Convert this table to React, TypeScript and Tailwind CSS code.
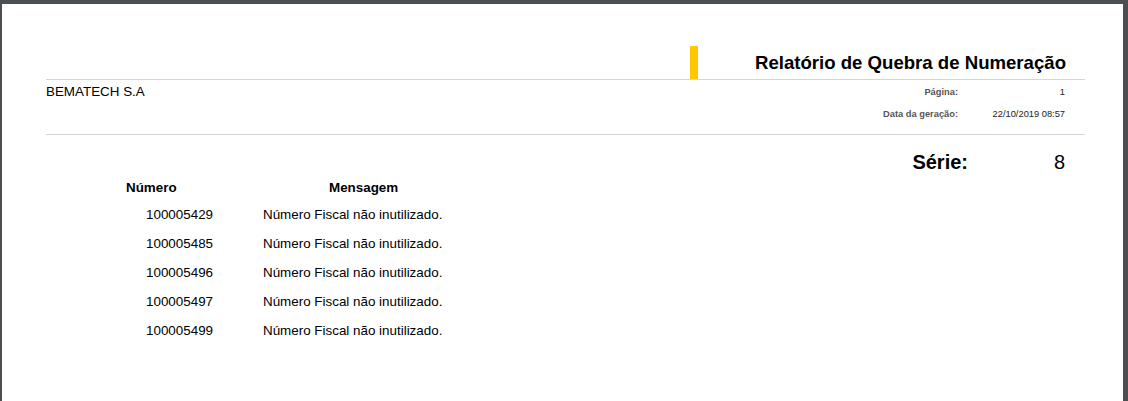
import React from "react";

const rows = ["100005429", "100005485", "100005496", "100005497", "100005499"];

export default function App() {
  return (
    <div
      className="w-[1128px] h-[401px] bg-[#4b4e53] pt-[4px] pl-[2px] pr-[5px] overflow-hidden"
      style={{ fontFamily: '"Liberation Sans", Arial, sans-serif' }}
    >
      <div className="bg-white h-full pl-[44px] pr-[38px] text-black">
        {/* Header */}
        <div className="pt-[42px]">
          <div className="flex items-end h-[34px] border-b border-[#d6d6d6]">
            <div className="ml-[644px] w-[8px] h-[33px] bg-[#ffc800]" />
            <div className="ml-auto pr-[19px] pb-[5px] text-[18.6px] font-bold leading-[22px]">
              Relatório de Quebra de Numeração
            </div>
          </div>
        </div>
        {/* Info */}
        <div className="flex h-[55px] border-b border-[#d6d6d6]">
          <div className="pt-[4px] text-[13.4px] leading-[15px]">BEMATECH S.A</div>
          <div className="ml-auto pr-[20px] pt-[7px] text-[9.3px] leading-[11px]">
            <div className="flex">
              <span className="w-[80px] text-right font-bold text-[#555]">Página:</span>
              <span className="w-[107px] text-right text-[#222]">1</span>
            </div>
            <div className="flex mt-[11px]">
              <span className="w-[80px] text-right font-bold text-[#555]">Data da geração:</span>
              <span className="w-[107px] text-right text-[#222]">22/10/2019 08:57</span>
            </div>
          </div>
        </div>
        {/* Série */}
        <div className="flex justify-end pr-[20px] pt-[16px] text-[20px] leading-[23px]">
          <span className="font-bold">Série:</span>
          <span className="w-[97px] text-right">8</span>
        </div>
        {/* Table */}
        <div className="pl-[80px] mt-[6px] text-[13.4px] leading-[15px]">
          <div className="flex font-bold">
            <span className="w-[203px]">Número</span>
            <span>Mensagem</span>
          </div>
          <div className="mt-[12px] flex flex-col gap-[14px]">
            {rows.map((n) => (
              <div key={n} className="flex">
                <span className="w-[137px] pl-[20px]">{n}</span>
                <span>Número Fiscal não inutilizado.</span>
              </div>
            ))}
          </div>
        </div>
      </div>
    </div>
  );
}
